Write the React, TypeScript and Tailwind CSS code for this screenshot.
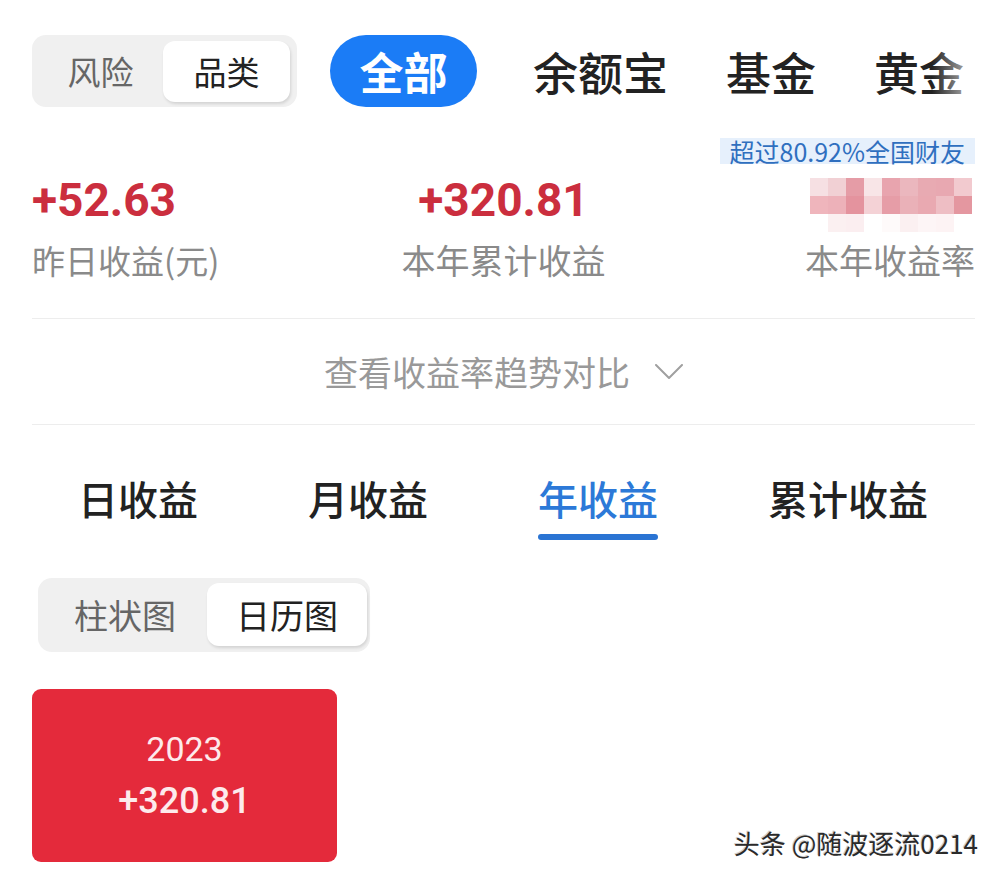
import React from 'react'

// 打码区块的颜色（三行九列）
const mosaic = [
  ['#f6e0e3', '#f1d0d4', '#e59ca6', '#f8e5e7', '#e8a4ae', '#ebb7be', '#e8aab2', '#e8a8b1', '#f2cacf'],
  ['#efb5bc', '#edb1b9', '#e4939e', '#f4d2d6', '#e69da7', '#eab1b8', '#e9a9b1', '#eebec4', '#e497a0'],
  ['#ffffff', '#fbf0f1', '#fbeef0', '#ffffff', '#fefafa', '#fbf0f1', '#fdf5f6', '#fdf3f4', '#ffffff'],
]

const categoryTabs = ['余额宝', '基金', '黄金']
const profitTabs = ['日收益', '月收益', '年收益', '累计收益']

export default function App() {
  return (
    <div className="relative min-h-[879px] w-full bg-white pl-[32px] pr-[27px] font-['Noto_Sans_CJK_SC',sans-serif]">
      {/* 顶部品类切换 */}
      <div className="relative flex items-center overflow-hidden pt-[35px]">
        <div className="flex h-[72px] w-[265px] shrink-0 items-start rounded-[14px] bg-[#f0f0f0] pt-[6px] pl-[6px]">
          <div className="flex h-[61px] w-[125px] items-center justify-center text-[33px] leading-[33px] text-[#666666]">
            风险
          </div>
          <div className="flex h-[61px] w-[127px] items-center justify-center rounded-[12px] bg-white text-[33px] leading-[33px] text-[#222222] shadow-[1px_2px_3px_rgba(0,0,0,0.12)]">
            品类
          </div>
        </div>
        <div className="ml-[33px] flex h-[72px] w-[147px] shrink-0 items-center justify-center rounded-full bg-[#1b7cf6] text-[44px] font-bold leading-[44px] text-white">
          全部
        </div>
        <div className="ml-[56px] flex shrink-0 items-center gap-[58px]">
          {categoryTabs.map((t) => (
            <span key={t} className="text-[45px] font-medium leading-[45px] text-[#222222]">
              {t}
            </span>
          ))}
        </div>
        <div className="pointer-events-none absolute bottom-0 right-[-27px] top-[35px] w-[70px] bg-linear-to-r from-white/0 via-white/60 to-white" />
      </div>

      {/* 排名提示 */}
      <div className="mt-[31px] flex justify-end">
        <div className="flex h-[26px] items-center bg-[#e6f0fc] px-[10px] text-[25px] leading-[26px] text-[#2f6fbf]">
          超过80.92%全国财友
        </div>
      </div>

      {/* 收益概览 */}
      <div className="mt-[13px] grid grid-cols-3">
        <div className="text-left">
          <div className="h-[46px] font-['Roboto',sans-serif] text-[46px] font-bold leading-[46px] text-[#cb2e3e]">
            +52.63
          </div>
          <div className="mt-[20px] text-[33px] leading-[34px] text-[#8a8a8a]">昨日收益(元)</div>
        </div>
        <div className="text-center">
          <div className="h-[46px] font-['Roboto',sans-serif] text-[46px] font-bold leading-[46px] text-[#cb2e3e]">
            +320.81
          </div>
          <div className="mt-[20px] text-[34px] leading-[34px] text-[#8a8a8a]">本年累计收益</div>
        </div>
        <div className="flex flex-col items-end">
          <div className="h-[46px] pt-px pr-[3px]">
            <div className="flex flex-col">
              {mosaic.map((row, i) => (
                <div key={i} className="flex">
                  {row.map((c, j) => (
                    <div key={j} className="h-[18px] w-[18px]" style={{ backgroundColor: c }} />
                  ))}
                </div>
              ))}
            </div>
          </div>
          <div className="mt-[20px] text-[34px] leading-[34px] text-[#8a8a8a]">本年收益率</div>
        </div>
      </div>

      <div className="mt-[41px] h-px bg-[#ededed]" />

      {/* 趋势对比入口 */}
      <div className="flex h-[105px] items-center justify-center">
        <span className="text-[34px] leading-[34px] text-[#999999]">查看收益率趋势对比</span>
        <svg className="ml-[25px]" width="28" height="16" viewBox="0 0 28 16" fill="none">
          <polyline points="1,1 14,14 27,1" stroke="#a0a0a0" strokeWidth="2" strokeLinecap="round" strokeLinejoin="round" />
        </svg>
      </div>

      <div className="h-px bg-[#ededed]" />

      {/* 收益周期 */}
      <div className="mt-[53px] flex gap-[110px] pl-[46px]">
        {profitTabs.map((t) => {
          const active = t === '年收益'
          return (
            <div key={t} className="flex flex-col items-stretch">
              <span
                className={
                  active
                    ? 'text-[40px] font-medium leading-[40px] text-[#2c79d8]'
                    : 'text-[40px] font-medium leading-[40px] text-[#222222]'
                }
              >
                {t}
              </span>
              {active ? (
                <div className="mt-[16px] h-[6px] rounded-full bg-[#2a74d3]" />
              ) : (
                <div className="mt-[16px] h-[6px]" />
              )}
            </div>
          )
        })}
      </div>

      {/* 图表类型 */}
      <div className="ml-[6px] mt-[38px] flex h-[74px] w-[332px] items-start rounded-[14px] bg-[#f0f0f0] pl-[5px] pt-[5px]">
        <div className="flex h-[63px] w-[164px] items-center justify-center text-[34px] leading-[34px] text-[#666666]">
          柱状图
        </div>
        <div className="flex h-[63px] w-[160px] items-center justify-center rounded-[12px] bg-white text-[34px] leading-[34px] text-[#222222] shadow-[1px_2px_3px_rgba(0,0,0,0.12)]">
          日历图
        </div>
      </div>

      {/* 年度日历 */}
      <div className="mt-[37px] flex h-[173px] w-[305px] flex-col items-center justify-center gap-[17px] rounded-[9px] bg-[#e42a3b] font-['Roboto',sans-serif] text-[#fdeaec]">
        <div className="text-[34px] leading-[34px]">2023</div>
        <div className="text-[36px] font-medium leading-[36px]">+320.81</div>
      </div>

      {/* 水印 */}
      <div className="absolute right-[24px] top-[830px] text-[26px] leading-[26px] text-[#2a2a2a] [text-shadow:1px_1px_0_#ffffff,-1px_-1px_0_#cfcfcf]">
        头条 @随波逐流0214
      </div>
    </div>
  )
}
